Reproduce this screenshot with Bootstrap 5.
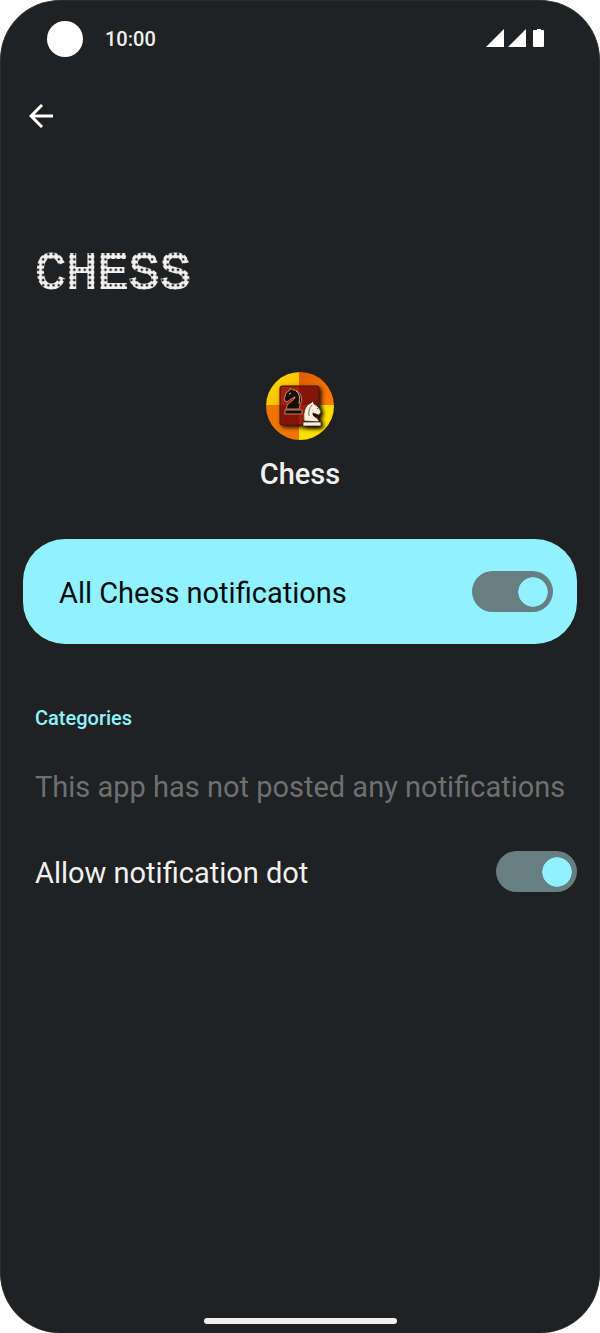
<!DOCTYPE html>
<html lang="en">
<head>
<meta charset="utf-8">
<meta name="viewport" content="width=device-width, initial-scale=1">
<title>Chess notifications</title>
<link href="https://cdn.jsdelivr.net/npm/bootstrap@5.3.0/dist/css/bootstrap.min.css" rel="stylesheet">
<style>
  :root { --surface: #1f2122; --accent: #92f1ff; --track: #677e83; --ink: #f1f1f1; }
  body { font-family: Roboto, "Liberation Sans", sans-serif; background: #fff; }
  .phone { background: var(--surface); color: var(--ink); border-radius: 60px; border: 1px solid #2a2c2d; border-bottom: 0; }
  .status { height: 76px; padding: 0 54px 0 46px; font-size: 20px; font-weight: 500; }
  .camera { width: 36px; height: 36px; background: #fff; }
  .clock { margin-left: 22px; }
  .back { width: 40px; height: 40px; margin-left: 20px; margin-top: 19px; color: #fff; }
  .title-dots {
    font-family: "Liberation Mono", monospace; font-size: 52px; line-height: 60px; font-weight: 400;
    margin: 109px 34px 0; color: transparent; -webkit-text-stroke: 2px transparent;
    background-image: radial-gradient(circle closest-side, var(--ink) 90%, transparent 110%);
    background-size: .1em .1em; background-position: 3px 4px;
    -webkit-background-clip: text; background-clip: text;
  }
  .app { margin-top: 67px; }
  .app-name { font-size: 29px; line-height: 36px; margin-top: 16px; }
  .main-toggle { background: var(--accent); color: #060b0c; border-radius: 42px; min-height: 105px; margin: 47px 22px 0; padding: 0 24px 0 36px; }
  .row-text { font-size: 29px; line-height: 36px; padding-top: 2px; }
  .section { font-size: 20px; line-height: 24px; color: var(--accent); margin: 62px 34px 0; }
  .empty { color: #6d7071; margin: 37px 0 0 34px; }
  .dot-row { margin: 46px 22px 0 34px; }
  .form-check-input.toggle {
    width: 81px; height: 41px; margin: 0; border: 0; border-radius: 21px; background-color: var(--track);
    background-image: radial-gradient(circle closest-side, var(--accent) 96%, transparent 100%);
    background-size: 30px 30px; background-repeat: no-repeat; background-position: left 5px center;
  }
  .form-check-input.toggle:checked { background-position: right 5px center; }
  .home-bar { width: 193px; height: 6px; background: #efefef; margin-bottom: 9px; }
</style>
</head>
<body>
<div class="phone min-vh-100 d-flex flex-column">
  <header>
    <div class="status d-flex align-items-center">
      <span class="camera rounded-circle"></span>
      <span class="clock">10:00</span>
      <svg class="ms-auto" width="60" height="20" viewBox="0 0 60 20" fill="#fff" aria-hidden="true">
        <path d="M1 18 19 0v18zM23 18 41 0v18zM52 0h4v1h2q1 0 1 1v15q0 1-1 1h-9q-1 0-1-1V2q0-1 1-1h3z"/>
      </svg>
    </div>
    <button type="button" class="back btn p-0 border-0 d-flex align-items-center justify-content-center" aria-label="Back">
      <svg width="24" height="24" viewBox="0 0 24 24" fill="none" stroke="currentColor" stroke-width="3"><path d="M24 12H2M13 1 2 12l11 11"/></svg>
    </button>
  </header>
  <main class="flex-grow-1">
    <h1 class="title-dots">CHESS</h1>
    <div class="app d-flex flex-column align-items-center">
      <svg width="68" height="68" viewBox="0 0 68 68" aria-hidden="true">
        <defs>
          <clipPath id="disc"><circle cx="34" cy="34" r="34"/></clipPath>
          <linearGradient id="gold" x2="1" y2="1"><stop stop-color="#ffe000"/><stop offset="1" stop-color="#f6b000"/></linearGradient>
          <linearGradient id="ember" x2="1" y2="1"><stop stop-color="#e05a00"/><stop offset="1" stop-color="#ff7c08"/></linearGradient>
          <filter id="shade" x="-30%" y="-30%" width="170%" height="170%"><feDropShadow dx="2" dy="2" stdDeviation="2" flood-opacity=".9"/></filter>
        </defs>
        <g clip-path="url(#disc)">
          <path fill="url(#gold)" d="M0 0h33v33H0z"/>
          <path fill="url(#ember)" d="M33 0h35v33H33z"/>
          <path fill="#f07400" d="M0 33h33v35H0z"/>
          <path fill="#ffdf00" d="M33 33h35v35H33z"/>
        </g>
        <rect x="14" y="14" width="39" height="39" rx="2" fill="#8e1808" stroke="#451007" filter="url(#shade)"/>
        <path fill="#b82d0c" d="M15 15h18v18H15zM33 33h19v19H33z" opacity=".45"/>
        <path fill="#701005" d="M33 15h19v18H33zM15 33h18v19H15z" opacity=".3"/>
        <g fill="#160c0a" stroke="#d99c72" stroke-width=".8">
          <path d="M20 37q0-5 6-8 3-2 3-4l-4 2-4 3-3-2 2-7 4-3V16l3 2q6 0 8 6 2 5-1 9l-1 4z"/>
          <path d="M19 38h17v4H19z"/>
        </g>
        <path d="M30 19q5 3 3 13M23 22l2-1" fill="none" stroke="#dca782"/>
        <g fill="#f5efdc" stroke="#2d2414" stroke-width=".7" filter="url(#shade)">
          <path d="M38 49q-1-7 1-12 2-5 6-6l2-2 1 3q5 2 7 8l-2 3-3-1-3-1q-1 2 2 4 4 2 4 5z"/>
          <path d="M37 50h18v4H37z"/>
        </g>
        <path d="M46 33q-4 4-3 11M51 36l1 1" fill="none" stroke="#776f5a"/>
      </svg>
      <h2 class="app-name mb-0">Chess</h2>
    </div>
    <div class="main-toggle d-flex align-items-center justify-content-between form-switch">
      <label class="row-text" for="all">All Chess notifications</label>
      <input class="form-check-input toggle flex-shrink-0" type="checkbox" role="switch" id="all" checked>
    </div>
    <h3 class="section">Categories</h3>
    <p class="row-text empty">This app has not posted any notifications</p>
    <div class="dot-row d-flex align-items-center justify-content-between">
      <label class="row-text" for="dot">Allow notification dot</label>
      <input class="form-check-input toggle flex-shrink-0" type="checkbox" role="switch" id="dot" checked>
    </div>
  </main>
  <footer class="d-flex justify-content-center"><div class="home-bar rounded-pill"></div></footer>
</div>
<script src="https://cdn.jsdelivr.net/npm/bootstrap@5.3.0/dist/js/bootstrap.bundle.min.js"></script>
</body>
</html>
